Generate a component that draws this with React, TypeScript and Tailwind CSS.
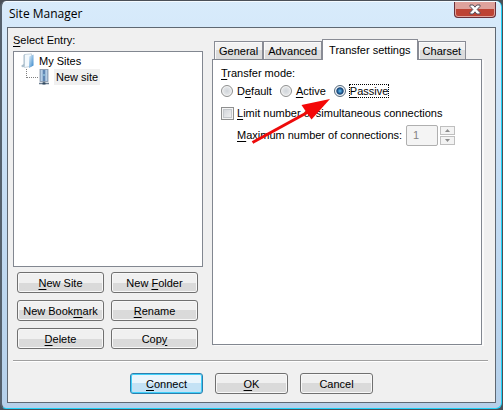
import React, { useState } from 'react';

const TABS = ['General', 'Advanced', 'Transfer settings', 'Charset'];

const MODES = [
  { id: 'default', before: 'D', key: 'e', after: 'fault' },
  { id: 'active', before: '', key: 'A', after: 'ctive' },
  { id: 'passive', before: '', key: 'P', after: 'assive' },
];

const SITE_ACTIONS = [
  { before: '', key: 'N', after: 'ew Site' },
  { before: 'New ', key: 'F', after: 'older' },
  { before: 'New Book', key: 'm', after: 'ark' },
  { before: '', key: 'R', after: 'ename' },
  { before: '', key: 'D', after: 'elete' },
  { before: 'Cop', key: 'y', after: '' },
];

interface HotLabelProps {
  before?: string;
  hot: string;
  after?: string;
}

// Label with its keyboard shortcut letter underlined
function HotLabel({ before = '', hot, after = '' }: HotLabelProps) {
  return (
    <span className="whitespace-pre">
      {before}
      <span className="underline underline-offset-2">{hot}</span>
      {after}
    </span>
  );
}

interface DialogButtonProps {
  children: React.ReactNode;
  primary?: boolean;
  className?: string;
}

function DialogButton({ children, primary = false, className = '' }: DialogButtonProps) {
  const look = primary
    ? 'border-[#2c7fae] from-[#eaf5fc] from-50% to-[#c4e2f5] to-50% shadow-[inset_0_0_0_1px_#40d0fa]'
    : 'border-[#707070] from-[#f0f0f0] from-50% to-[#dadada] to-50% shadow-[inset_0_0_0_1px_#f8f8f8]';
  return (
    <button type="button" className={`h-[21px] flex items-center justify-center rounded-[3px] border bg-linear-to-b ${look} ${className}`}>
      {children}
    </button>
  );
}

function FolderIcon() {
  return (
    <svg className="w-4 h-4 shrink-0" viewBox="0 0 16 16">
      <defs>
        <linearGradient id="folder" x1="0" x2="1" y1="0" y2="1">
          <stop offset="0" stopColor="#e8f4fc" />
          <stop offset="1" stopColor="#2f82c8" />
        </linearGradient>
      </defs>
      <path d="M0 13 2.5 11V2l2-1v11.5L2 14.5z" fill="#a9bdcb" />
      <path d="M3.5 1.5 10.5.8v12.4l-7 1.3z" fill="#f3f9fd" stroke="#a9bdcb" strokeWidth=".6" />
      <path d="M8 3.5 12.5 1.5v11L8 15z" fill="url(#folder)" />
    </svg>
  );
}

function ServerIcon() {
  return (
    <svg className="w-3 h-4 shrink-0" viewBox="0 0 12 16">
      <rect x="2" y=".5" width="8" height="12" fill="#9db9d8" stroke="#8494a8" strokeWidth=".8" />
      <path d="M3.5 1v11M8.5 1v11" stroke="#b7d0e8" />
      <path d="M6 1v11" stroke="#4d77a8" strokeWidth="1.5" />
      <path d="M6 5v2" stroke="#a7e0ef" />
      <path d="M6 12.5V14M1 14.5h10" stroke="#687b8e" strokeWidth="1.5" />
      <path d="M4.5 14.5h3" stroke="#30485f" strokeWidth="2" />
    </svg>
  );
}

function CloseIcon() {
  return (
    <svg className="w-3 h-[11px]" viewBox="0 0 12 11">
      <path
        d="M1 1h3.2L6 3.2 7.8 1H11v1.4L8.2 5.5 11 8.6V10H7.8L6 7.8 4.2 10H1V8.6l2.8-3.1L1 2.4z"
        fill="#fff"
        stroke="#56505c"
        strokeWidth="1"
      />
    </svg>
  );
}

function TitleBar() {
  return (
    <header className="h-[25px] flex items-start justify-between pl-0.5">
      <h1 className="pt-1 font-['Open_Sans',sans-serif] text-[12px] leading-4">Site Manager</h1>
      <button
        type="button"
        aria-label="Close"
        className="w-[42px] h-4 flex items-center justify-center rounded-b border border-t-0 border-[#67303a] bg-linear-to-b from-[#dea29c] from-45% to-[#bd4334] to-50% shadow-[inset_0_0_0_1px_#e0a39c]"
      >
        <CloseIcon />
      </button>
    </header>
  );
}

function SiteTree() {
  return (
    <div className="grow border border-[#828790] bg-white pl-[7px] pt-px">
      <div className="h-4 flex items-center">
        <FolderIcon />
        <span className="px-0.5">My Sites</span>
      </div>
      <div className="h-4 flex items-center pl-[5px]">
        <span className="self-start w-3 h-[9px] border-l border-b border-dotted border-[#808080]" />
        <span className="flex items-center gap-1">
          <ServerIcon />
          <span className="h-4 bg-[#f0f0f0] px-0.5 leading-4">New site</span>
        </span>
      </div>
    </div>
  );
}

function TabStrip({ active, onSelect }: { active: string; onSelect: (tab: string) => void }) {
  return (
    <div role="tablist" className="h-[21px] flex items-end pl-0.5">
      {TABS.map((tab) => (
        <button
          key={tab}
          type="button"
          role="tab"
          aria-selected={tab === active}
          onClick={() => onSelect(tab)}
          className={
            tab === active
              ? 'relative z-10 h-[21px] -mb-px px-1.5 pb-px border border-b-0 border-[#898c95] bg-white'
              : 'h-[18px] px-1 border border-b-0 border-[#898c95] bg-linear-to-b from-[#f2f2f2] from-50% to-[#dcdcdc] to-50% shadow-[inset_1px_1px_0_#fafafa]'
          }
        >
          {tab}
        </button>
      ))}
    </div>
  );
}

function Spinner({ disabled }: { disabled: boolean }) {
  const arrow = 'w-[15px] h-[9px] flex items-center justify-center border border-[#bfbfbf] bg-[#f3f3f3]';
  return (
    <span className="flex flex-col gap-px">
      <button type="button" aria-label="Increase" disabled={disabled} className={arrow}>
        <svg className="w-[5px] h-[3px]" viewBox="0 0 5 3">
          <path d="M2.5 0 5 3H0z" fill="#8c8c8c" />
        </svg>
      </button>
      <button type="button" aria-label="Decrease" disabled={disabled} className={arrow}>
        <svg className="w-[5px] h-[3px]" viewBox="0 0 5 3">
          <path d="M0 0h5L2.5 3z" fill="#8c8c8c" />
        </svg>
      </button>
    </span>
  );
}

function TransferSettings() {
  const [mode, setMode] = useState('passive');
  const [limited, setLimited] = useState(false);
  const [max, setMax] = useState('1');

  return (
    <div role="tabpanel" className="relative grow border border-[#828790] bg-white pl-2 pt-[5px] shadow-[2px_1px_0_#fafafa]">
      <fieldset>
        <legend className="h-4 leading-4">
          <HotLabel hot="T" after="ransfer mode:" />
        </legend>
        <div className="h-5 flex items-center gap-[7px]">
          {MODES.map((m) => (
            <label key={m.id} className="flex items-center gap-[3px]">
              <input
                type="radio"
                name="mode"
                checked={mode === m.id}
                onChange={() => setMode(m.id)}
                className="appearance-none w-3 h-3 rounded-full border border-[#8e8f8f] bg-radial from-[#cfd4d9] to-[#f4f4f4] shadow-[inset_0_0_0_1px_#f4f4f4] checked:border-[#54697c] checked:from-[#4fa6dc] checked:from-10% checked:via-[#123f73] checked:via-45% checked:to-[#e4eef5] checked:to-60%"
              />
              <span className={mode === m.id ? 'h-[14px] leading-3 border border-dotted border-black' : 'h-[14px] leading-3 border border-transparent'}>
                <HotLabel before={m.before} hot={m.key} after={m.after} />
              </span>
            </label>
          ))}
        </div>
      </fieldset>

      <label className="mt-0.5 h-5 flex items-center gap-[3px]">
        <input
          type="checkbox"
          checked={limited}
          onChange={(e) => setLimited(e.target.checked)}
          className="appearance-none w-[13px] h-[13px] border border-[#8e8f8f] bg-linear-to-br from-[#cbcfd5] to-[#f6f6f6] shadow-[inset_0_0_0_1px_#f4f4f4,inset_0_0_0_2px_#c4c8cc] checked:from-[#123f63]"
        />
        <HotLabel hot="L" after="imit number of simultaneous connections" />
      </label>

      <div className="mt-px h-[22px] flex items-center pl-4">
        <label htmlFor="max" className="pr-1">
          <HotLabel hot="M" after="aximum number of connections:" />
        </label>
        <input
          id="max"
          type="text"
          value={max}
          disabled={!limited}
          onChange={(e) => setMax(e.target.value)}
          className="w-8 h-[21px] mr-0.5 pl-1.5 rounded-xs border border-[#afafaf] bg-white disabled:bg-[#f4f4f4] disabled:text-[#838383]"
        />
        <Spinner disabled={!limited} />
      </div>

      {/* Red pointer drawn across the options */}
      <svg className="absolute left-[37px] top-[38px] w-[82px] h-[48px] pointer-events-none" viewBox="0 0 82 48">
        <path d="M2.5 44.5 60 13" stroke="#ed0b0b" strokeWidth="3" />
        <path d="M80 1 61.5 21.5 56.5 14.5 51.5 7z" fill="#f40808" />
      </svg>
    </div>
  );
}

export default function App() {
  const [tab, setTab] = useState('Transfer settings');

  return (
    <div className="min-h-screen flex flex-col bg-[#4a5058] pt-px pr-px pb-px font-['Liberation_Sans',sans-serif] text-[11px] leading-4 text-black">
      <div className="grow flex flex-col rounded-md border-r border-b border-l-2 border-l-[#55616d] border-r-[#1ed2f8] border-b-[#1ed2f8] bg-linear-to-b from-[#d8ebfb] via-[#c4dcf3] to-[#b5d0ea] px-1 shadow-[inset_0_1px_0_#f4faff]">
        <div className="grow flex flex-col px-px pb-[5px] pt-px">
          <TitleBar />
          <main className="grow flex flex-col border border-[#5f6872] bg-[#f0f0f0] px-[5px]">
            <div className="grow flex gap-[9px] pt-1">
              <section className="w-[190px] shrink-0 flex flex-col">
                <h2 className="h-[19px]">
                  <HotLabel hot="S" after="elect Entry:" />
                </h2>
                <SiteTree />
                <div className="grid grid-cols-2 gap-[7px] pl-1 pr-[5px] pt-[5px]">
                  {SITE_ACTIONS.map((a) => (
                    <DialogButton key={a.key}>
                      <HotLabel before={a.before} hot={a.key} after={a.after} />
                    </DialogButton>
                  ))}
                </div>
              </section>
              <section className="grow flex flex-col pt-1.5 pb-1 pr-2">
                <TabStrip active={tab} onSelect={setTab} />
                <TransferSettings />
              </section>
            </div>
            <hr className="mt-[11px] mr-0.5 border-t-[#a0a0a0] shadow-[0_1px_0_#fff]" />
            <footer className="flex justify-center gap-3 pt-3 pb-2">
              <DialogButton primary className="w-[73px]">
                <HotLabel hot="C" after="onnect" />
              </DialogButton>
              <DialogButton className="w-[73px]">
                <HotLabel hot="O" after="K" />
              </DialogButton>
              <DialogButton className="w-[73px]">Cancel</DialogButton>
            </footer>
          </main>
        </div>
      </div>
    </div>
  );
}
